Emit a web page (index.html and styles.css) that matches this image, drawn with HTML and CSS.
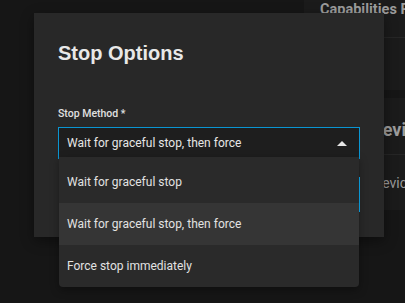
FILE: index.html
```html
<!DOCTYPE html>
<html lang="en">
<head>
    <meta charset="UTF-8">
    <meta name="viewport" content="width=device-width, initial-scale=1.0">
    <title>Stop Options</title>
    <link rel="stylesheet" href="styles.css">
</head>
<body>
    <div class="page">
        <div class="side">
            <div class="card">
                <div class="card-head">Capabilities P</div>
                <div class="card-body"></div>
            </div>
            <div class="card card-devices">
                <div class="card-head">Devic</div>
                <div class="card-body">Devic</div>
            </div>
        </div>
    </div>

    <div class="dialog">
        <h2>Stop Options</h2>
        <label class="field-label">Stop Method *</label>
        <div class="select">
            <span>Wait for graceful stop, then force</span>
            <span class="caret"></span>
        </div>
    </div>

    <div class="options">
        <div class="option">Wait for graceful stop</div>
        <div class="option selected">Wait for graceful stop, then force</div>
        <div class="option">Force stop immediately</div>
        <span class="edge"></span>
    </div>
</body>
</html>
```

FILE: styles.css
```css
body {
    margin: 0;
    background: #161616;
    font-family: Roboto, sans-serif;
    color: #e6e6e6;
    width: 405px;
    height: 303px;
    overflow: hidden;
}
.page {
    display: flex;
    justify-content: flex-end;
    height: 303px;
}
.side {
    width: 101px;
    overflow: hidden;
}
.card {
    background: #1b1b1b;
}
.card-head {
    font-weight: bold;
    font-size: 14.5px;
    color: #9c9c9c;
    padding: 0 0 0 16px;
    height: 37px;
    line-height: 19px;
    white-space: nowrap;
    border-bottom: 1px solid #262626;
}
.card .card-body {
    height: 52px;
}
.card-devices {
    margin-top: 8px;
}
.card-devices .card-head {
    height: 56px;
    line-height: 64px;
    font-size: 18px;
    padding-left: 67px;
}
.card-devices .card-body {
    height: 55px;
    line-height: 56px;
    padding-left: 69px;
    font-size: 14px;
    font-weight: normal;
    color: #9a9a9a;
    white-space: nowrap;
}

.dialog {
    position: absolute;
    left: 34px;
    top: 13px;
    width: 350px;
    height: 224px;
    box-sizing: border-box;
    padding: 24px 24px;
    background: #282828;
    box-shadow: 0 4px 12px rgba(0, 0, 0, 0.4);
}
.dialog h2 {
    margin: 4px 0 0;
    font-family: 'Liberation Sans', sans-serif;
    font-size: 20px;
    line-height: 24px;
    color: #e8e8e8;
}
.field-label {
    display: block;
    margin-top: 42px;
    font-size: 10.5px;
    font-weight: 500;
    line-height: 14px;
    color: #e0e0e0;
}
.select {
    margin-top: 6px;
    height: 32px;
    box-sizing: border-box;
    border: 1px solid #0a95d2;
    background: #1e1e1e;
    display: flex;
    align-items: center;
    justify-content: space-between;
    padding: 0 12px 0 8px;
    font-size: 12px;
    color: #e6e6e6;
}
.caret {
    width: 0;
    height: 0;
    border-left: 5px solid transparent;
    border-right: 5px solid transparent;
    border-bottom: 5px solid #e6e6e6;
}

.options {
    position: absolute;
    left: 59px;
    top: 157px;
    width: 300px;
    padding-top: 4px;
    background: #2a2a2a;
    border-radius: 0 0 4px 4px;
    box-shadow: 0 3px 8px rgba(0, 0, 0, 0.35);
}
.option {
    height: 42px;
    line-height: 42px;
    padding-left: 8px;
    font-size: 12px;
    color: #e2e2e2;
}
.option.selected {
    background: #353535;
}
.edge {
    position: absolute;
    right: -1px;
    top: 20px;
    width: 1px;
    height: 35px;
    background: #0a95d2;
}
```
